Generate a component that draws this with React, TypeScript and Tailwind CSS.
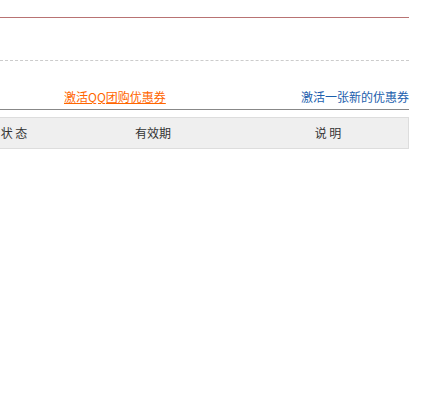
export default function App() {
  return (
    <div
      className="w-[409px] bg-white pt-[17px] text-[12px] text-[#333]"
      style={{ fontFamily: '"Noto Sans CJK SC", "Liberation Sans", sans-serif' }}
    >
      <div className="h-[44px] border-t border-[#b87373] border-b border-b-[#cccccc] border-dashed [border-top-style:solid]" />
      <div className="flex h-[49px] items-end justify-between border-b border-[#888] pb-[4px] leading-[16px]">
        <a href="#" className="ml-[64px] text-[#ff6600] underline">
          激活QQ团购优惠券
        </a>
        <a href="#" className="text-[#1c60ad]">
          激活一张新的优惠券
        </a>
      </div>
      <div className="ml-[-31px] mt-[7px] flex h-[32px] border border-[#dddddd] bg-[#efefef]">
        <div className="flex w-[88px] items-center justify-center">状 态</div>
        <div className="flex w-[190px] items-center justify-center">有效期</div>
        <div className="flex flex-1 items-center justify-center">说 明</div>
      </div>
    </div>
  );
}
